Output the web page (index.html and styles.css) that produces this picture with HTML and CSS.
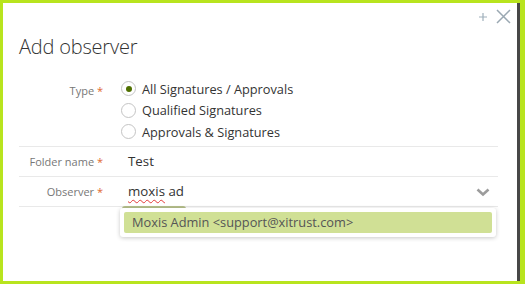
FILE: index.html
```html
<!DOCTYPE html>
<html>
<head>
<meta charset="utf-8">
<link rel="stylesheet" href="styles.css">
</head>
<body>
<div class="dialog">
  <div class="tools">
    <svg class="plus" width="10" height="10" viewBox="0 0 10 10"><path d="M5 1v8M1 5h8" stroke="#9fb0bb" stroke-width="1.2" fill="none"/></svg>
    <svg class="close" width="15" height="15" viewBox="0 0 15 15"><path d="M1 1L14 14M14 1L1 14" stroke="#9aa8b2" stroke-width="1.5" fill="none"/></svg>
  </div>
  <h1 class="title">Add observer</h1>
  <div class="form">
    <div class="row row-type">
      <div class="label">Type <span class="req">*</span></div>
      <div class="radios">
        <div class="radio"><span class="circle checked"></span><span>All Signatures / Approvals</span></div>
        <div class="radio"><span class="circle"></span><span>Qualified Signatures</span></div>
        <div class="radio"><span class="circle"></span><span>Approvals &amp; Signatures</span></div>
      </div>
    </div>
    <div class="row">
      <div class="label">Folder name <span class="req">*</span></div>
      <div class="value">Test</div>
    </div>
    <div class="row">
      <div class="label">Observer <span class="req">*</span></div>
      <div class="value"><span class="spell">moxis</span> ad</div>
      <svg class="chev" width="14" height="9" viewBox="0 0 14 9"><path d="M1.5 1.5L7 6.5L12.5 1.5" stroke="#9c9c9c" stroke-width="2.6" fill="none"/></svg>
    </div>
  </div>
  <div class="tab"></div>
  <div class="menu">
    <div class="option">Moxis Admin &lt;support@xitrust.com&gt;</div>
  </div>
</div>
</body>
</html>
```
FILE: styles.css
```css
html, body {
  margin: 0;
  padding: 0;
}
body {
  width: 525px;
  height: 284px;
  box-sizing: border-box;
  background: #b8e41e;
  padding: 3px 5px 3px 3px;
  font-family: "Open Sans", sans-serif;
}
.dialog {
  position: relative;
  height: 100%;
  background: #fff;
  border-right: 3px solid #474747;
  box-sizing: border-box;
  padding: 0 19px 0 16px;
}
.tools {
  display: flex;
  justify-content: flex-end;
  align-items: center;
  gap: 8px;
  height: 26px;
  margin-right: -13px;
}
.tools svg { display: block; }
.plus { margin-top: 1px; }
.title {
  margin: 4px 0 0 0;
  font-weight: 300;
  font-size: 20px;
  line-height: 28px;
  color: #333;
  letter-spacing: -0.2px;
}
.form {
  margin-top: 17px;
}
.row {
  display: flex;
  align-items: center;
  height: 29px;
  border-bottom: 1px solid #e9e9e9;
  position: relative;
}
.row-type {
  align-items: flex-start;
  height: auto;
  padding-bottom: 3px;
}
.label {
  width: 84px;
  text-align: right;
  color: #777;
  font-size: 11px;
  flex: none;
}
.row-type .label {
  margin-top: 5px;
}
.req { color: #e0672f; }
.radios {
  margin-left: 18px;
  display: flex;
  flex-direction: column;
}
.radio {
  display: flex;
  align-items: center;
  height: 21.5px;
  font-size: 12.75px;
  color: #333;
}
.circle {
  border: 1px solid #c4c4c4;
  border-radius: 50%;
  margin-right: 6px;
  box-sizing: border-box;
  width: 15px;
  height: 15px;
  display: flex;
  align-items: center;
  justify-content: center;
  background: #fff;
}
.circle.checked::after {
  content: "";
  width: 6px;
  height: 6px;
  border-radius: 50%;
  background: #4f7000;
}
.value {
  margin-left: 25px;
  font-size: 13.3px;
  color: #333;
}
.spell {
  text-decoration: underline wavy #e23a3a;
  text-decoration-thickness: 1px;
  text-underline-offset: 3px;
}
.chev {
  position: absolute;
  right: 8px;
  top: 11px;
}
.tab {
  position: absolute;
  left: 119px;
  top: 203px;
  width: 64px;
  height: 4px;
  background: #b5bf8b;
  border-radius: 3px 3px 0 0;
}
.menu {
  position: absolute;
  left: 117px;
  top: 205px;
  width: 376px;
  height: 29px;
  box-sizing: border-box;
  background: #fff;
  border-radius: 3px;
  box-shadow: 0 1px 4px rgba(0,0,0,0.22);
  padding: 4px;
}
.option {
  height: 21px;
  background: #d0e095;
  border-radius: 2px;
  font-size: 12.8px;
  color: #555;
  line-height: 21px;
  padding-left: 8px;
}
```
